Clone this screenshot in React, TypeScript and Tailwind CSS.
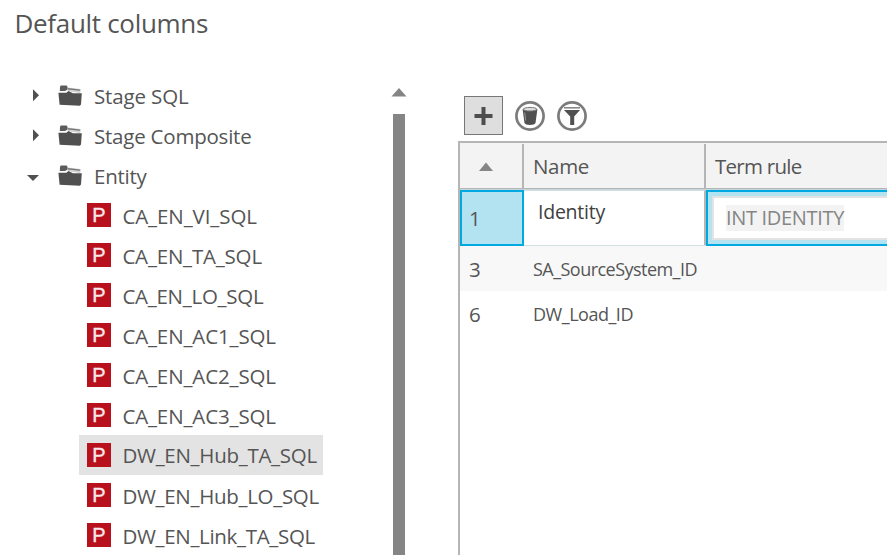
import { useLayoutEffect, useRef, useState } from "react";

function FitText({ text, width, className }: { text: string; width: number; className: string }) {
  const ref = useRef<HTMLSpanElement>(null);
  const [spacing, setSpacing] = useState(0);

  // Spread the difference between the natural and the wanted width over the glyphs.
  useLayoutEffect(() => {
    if (!ref.current) return;
    const natural = ref.current.getBoundingClientRect().width - spacing * text.length;
    setSpacing((width - natural) / text.length);
  }, [text, width]);

  return (
    <span ref={ref} className={"inline-block whitespace-nowrap " + className} style={{ letterSpacing: spacing }}>
      {text}
    </span>
  );
}

function FolderIcon() {
  return (
    <svg width="26" height="24" viewBox="0 0 26 24" className="shrink-0">
      <path d="M3 3 3.6 1.4h6l1 1.6v2.6L8 7H2.8z" fill="#5c5c5c" />
      <path d="M10.6 3.4 23.4 5v3.4l-1 .6-11.8-2z" fill="#d0d0d0" />
      <path d="M10.6 4 23.2 5.4v1.4L10.6 5.6z" fill="#777" />
      <path d="M1.4 8.8h8l2-1.8 4.6 2.2h8.8l-.8 11.2-1.2 1.4L2.6 20.8z" fill="#505050" />
    </svg>
  );
}

const folders = [
  { name: "Stage SQL", width: 94.5, open: false },
  { name: "Stage Composite", width: 157.5, open: false },
  { name: "Entity", width: 52.5, open: true },
];

const items = [
  { name: "CA_EN_VI_SQL", width: 134.5 },
  { name: "CA_EN_TA_SQL", width: 139.5 },
  { name: "CA_EN_LO_SQL", width: 141 },
  { name: "CA_EN_AC1_SQL", width: 153.5 },
  { name: "CA_EN_AC2_SQL", width: 153.5 },
  { name: "CA_EN_AC3_SQL", width: 153.5 },
  { name: "DW_EN_Hub_TA_SQL", width: 194.5, selected: true },
  { name: "DW_EN_Hub_LO_SQL", width: 196.5 },
  { name: "DW_EN_Link_TA_SQL", width: 192.5 },
];

const label = "text-[20.5px] leading-[28px]";

function Tree() {
  return (
    <div className="w-[390px] shrink-0">
      {folders.map((f) => (
        <div key={f.name} className="flex h-10 items-start pl-[26px]">
          <svg width="14" height="40" viewBox="0 0 14 40" className="mr-[17px] shrink-0">
            {f.open ? <path d="M1 20h12l-6 6z" fill="#505050" /> : <path d="M7 14.2v12l6-6z" fill="#505050" />}
          </svg>
          <div className="mr-[11px] pt-[9px]"><FolderIcon /></div>
          <FitText text={f.name} width={f.width} className={label + " mt-[7px]"} />
        </div>
      ))}
      {items.map((it) => (
        <div
          key={it.name}
          className={"ml-[79px] flex h-10 w-[244px] items-start pl-2 pt-2 " + (it.selected ? "bg-[#e3e3e3]" : "")}
        >
          <div className="mr-[11.4px] flex h-6 w-6 shrink-0 justify-center bg-[#b9101e] text-[20px] leading-[24px] text-[#f8e6e8] [-webkit-text-stroke:0.35px_#f8e6e8]">
            <span className="font-['Liberation_Sans']">P</span>
          </div>
          <FitText text={it.name} width={it.width} className={label + (it.selected ? " -mt-[2px]" : " -mt-px")} />
        </div>
      ))}
    </div>
  );
}

function Toolbar() {
  return (
    <div className="flex h-[39px] items-center pl-[6px]">
      <button className="flex h-[39px] w-[39px] items-center justify-center border border-[#777] bg-[#dedede]">
        <svg width="20" height="20" viewBox="0 0 20 20">
          <path d="M9.5 1v18M.5 10h18" stroke="#4d4d4d" strokeWidth="4" />
        </svg>
      </button>
      <svg width="30" height="30" viewBox="0 0 30 30" className="ml-3">
        <circle cx="15" cy="15" r="13.6" fill="#fff" stroke="#7c7c7c" strokeWidth="2.7" />
        <path d="M7.6 8.2 9.5 22c.5 2.5 10.5 2.5 11 0l1.9-13.8z" fill="#505050" />
        <ellipse cx="15" cy="8.2" rx="6.8" ry="1.8" fill="#ddd" stroke="#777" strokeWidth="1" />
        <path d="m9.7 11.5 1 8" stroke="#999" strokeWidth="1" />
      </svg>
      <svg width="30" height="30" viewBox="0 0 30 30" className="ml-3">
        <circle cx="15" cy="15" r="13.6" fill="#fff" stroke="#7c7c7c" strokeWidth="2.7" />
        <path d="M7 6.8h16" stroke="#888" strokeWidth="1.6" />
        <path d="M7 9h16l-5.8 6.5V24h-4v-8.5z" fill="#505050" />
      </svg>
    </div>
  );
}

function Grid() {
  return (
    <div className="mt-[6px] h-[420px] border-l-2 border-t-2 border-[#b5b5b5]">
      <div className="flex h-[45px] bg-[#f3f3f3]">
        <div className="mt-[1px] flex w-[64px] shrink-0 justify-center border-r-2 border-[#b5b5b5] pr-[11px]">
          <svg width="16" height="44" viewBox="0 0 16 44">
            <path d="M1 27h14l-7-8.5z" fill="#858585" />
          </svg>
        </div>
        <div className="mt-px w-[182px] shrink-0 border-r-2 border-[#b5b5b5] pl-[9px] pt-[8px]">
          <FitText text="Name" width={56} className={label} />
        </div>
        <div className="grow pl-[9px] pt-[9px]">
          <FitText text="Term rule" width={86.5} className={label} />
        </div>
      </div>
      <div className="h-px bg-[#b5b5b5]" />
      <div className="h-px bg-[#c3d6dc]" />
      <div className="flex h-14 border-b border-[#d4dfe2]">
        <div className="-mb-px w-[64px] shrink-0 border-2 border-[#00aae0] bg-[#b3e2f0] pl-[7px] pt-[12px]">
          <FitText text="1" width={12} className={label} />
        </div>
        <div className="w-[182px] shrink-0 border-r-2 border-t border-r-[#b5b5b5] border-t-[#d4dfe2] bg-white pl-[14px] pt-[7px]">
          <FitText text="Identity" width={67} className="text-[19.5px] leading-[28px] text-[#404040]" />
        </div>
        <div className="-mb-px grow border-2 border-r-0 border-[#00aae0] bg-[#b3e2f0] py-1 pl-1">
          <div className="flex h-full items-center border-2 border-r-0 border-[#e3e3e3] bg-white pl-[12px]">
            <div className="h-[26px] w-[118px] bg-[#f3f3f3]">
              <FitText text="INT IDENTITY" width={118} className="text-[20px] leading-[26px] text-[#858585]" />
            </div>
          </div>
        </div>
      </div>
      <div className="flex h-[45px] bg-[#f8f8f8] pl-[9px]">
        <div className="w-[64px] shrink-0 pt-[9px]"><FitText text="3" width={12} className={label} /></div>
        <div className="pt-[9px]"><FitText text="SA_SourceSystem_ID" width={164} className="text-[18px] leading-[28px]" /></div>
      </div>
      <div className="flex h-[45px] bg-white pl-[9px]">
        <div className="w-[64px] shrink-0 pt-[9px]"><FitText text="6" width={12} className={label} /></div>
        <div className="pt-[9px]"><FitText text="DW_Load_ID" width={100} className="text-[18px] leading-[28px]" /></div>
      </div>
    </div>
  );
}

export default function App() {
  return (
    <div className="flex h-[555px] w-[887px] flex-col overflow-hidden bg-white font-['Open_Sans',sans-serif] text-[#555]">
      <h1 className="h-[75px] shrink-0 pl-[14.5px] pt-[3px] text-[26px] leading-[40px]">
        <FitText text="Default columns" width={193.5} className="" />
      </h1>
      <div className="flex h-[480px] overflow-hidden">
        <Tree />
        <div className="flex w-[18px] shrink-0 flex-col items-center pt-[13px]">
          <svg width="16" height="9" viewBox="0 0 16 9" className="shrink-0"><path d="M.5 8.5 8 0l7.5 8.5z" fill="#858585" /></svg>
          <div className="mt-[17px] w-3 grow bg-[#858585]" />
        </div>
        <div className="ml-[50px] w-[429px] shrink-0 pt-[21px]">
          <Toolbar />
          <Grid />
        </div>
      </div>
    </div>
  );
}
